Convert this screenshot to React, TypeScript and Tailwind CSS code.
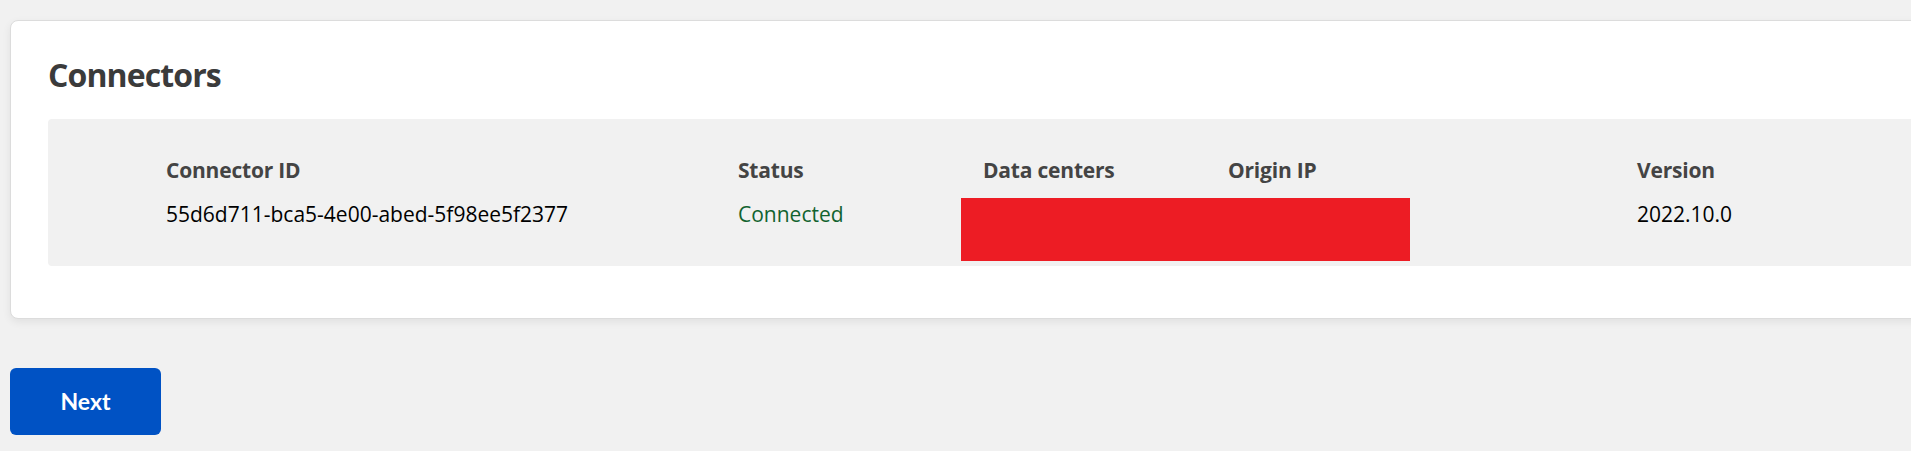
import React from "react";

const columns = [
  { title: "Connector ID", width: "w-[572px]" },
  { title: "Status", width: "w-[245px]" },
  { title: "Data centers", width: "w-[245px]" },
  { title: "Origin IP", width: "w-[409px]" },
  { title: "Version", width: "flex-1" },
];

export default function App() {
  return (
    <div className="w-full h-[451px] overflow-hidden bg-[#f1f1f1] font-['Open_Sans',sans-serif] pt-[20px] pl-[10px]">
      {/* card runs past the right edge of the window */}
      <div className="w-[2000px] bg-white border border-[#dcdcdc] rounded-lg shadow-[0_3px_8px_rgba(0,0,0,0.07)] pl-[37px] pr-[38px] pt-[34px] pb-[52px]">
        <h2 className="text-[32px] leading-[40px] font-bold text-[#3b3b3b] tracking-[-0.9px]">Connectors</h2>

        <div className="relative mt-[24px] bg-[#f1f1f1] rounded-[4px] pl-[118px] pt-[37px] pb-[38px] text-[21px] leading-[28px]">
          <div className="flex">
            {columns.map((c) => (
              <div key={c.title} className={c.width + " font-bold text-[#444444] tracking-[-0.2px]"}>
                {c.title}
              </div>
            ))}
          </div>
          <div className="flex mt-[16px]">
            <div className="w-[572px] text-black">55d6d711-bca5-4e00-abed-5f98ee5f2377</div>
            <div className="w-[245px] text-[#11632f]">Connected</div>
            <div className="w-[245px]"></div>
            <div className="w-[409px]"></div>
            <div className="flex-1 text-black">2022.10.0</div>
          </div>
          {/* redaction block over data centers / origin ip */}
          <div className="absolute left-[913px] top-[79px] w-[449px] h-[63px] bg-[#ed1c24]" />
        </div>
      </div>

      <button className="mt-[49px] w-[151px] h-[67px] rounded-[6px] bg-[#0052c4] text-white text-[23px] font-bold font-['Lato',sans-serif]">
        Next
      </button>
    </div>
  );
}
